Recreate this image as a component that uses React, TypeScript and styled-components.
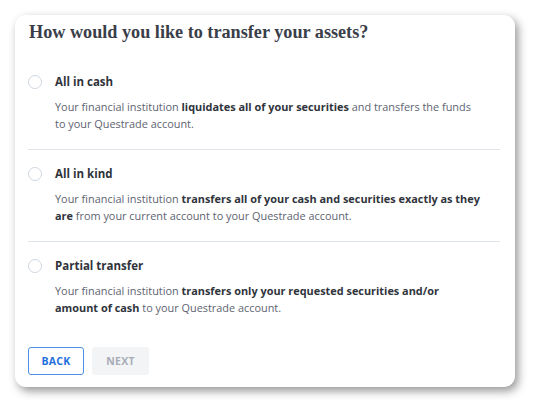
import React from "react";
import styled, { createGlobalStyle } from "styled-components";

const Global = createGlobalStyle`
  html, body { margin: 0; padding: 0; background: #ffffff; }
  body { font-family: "Open Sans", "Liberation Sans", sans-serif; }
`;

const Page = styled.div`
  padding: 15px 25px 26px 15px;
  width: 540px;
  box-sizing: border-box;
`;

const Card = styled.section`
  width: 500px;
  height: 372px;
  box-sizing: border-box;
  background: #fff;
  border-radius: 11px;
  box-shadow: 3px 4px 10px rgba(0, 0, 0, 0.42);
  padding: 6px 15px 12px 13px;
  display: flex;
  flex-direction: column;
`;

const Title = styled.h1`
  margin: 0 0 15px 1px;
  font-family: "Liberation Serif", "DejaVu Serif", serif;
  font-weight: 700;
  font-size: 18.2px;
  line-height: 22px;
  color: #3a3e49;
`;

const Option = styled.div<{ $last?: boolean }>`
  display: flex;
  gap: 13px;
  padding: 15px 0 ${(p) => (p.$last ? "0" : "17px")} 0;
  border-bottom: ${(p) => (p.$last ? "none" : "1px solid #dfe4ea")};
`;

const Radio = styled.span`
  flex: 0 0 auto;
  width: 14px;
  height: 14px;
  margin-top: 2px;
  border-radius: 50%;
  border: 1px solid #cfd6e0;
  box-sizing: border-box;
  background: #fff;
`;

const OptionBody = styled.div`
  display: flex;
  flex-direction: column;
  gap: 8px;
  flex: 1;
`;

const OptionTitle = styled.div`
  font-weight: 700;
  font-size: 11.5px;
  line-height: 18px;
  color: #2f333b;
`;

const Desc = styled.p`
  margin: 0;
  font-size: 10.9px;
  line-height: 16.5px;
  color: #5d6370;
  b {
    font-weight: 700;
    color: #30343c;
  }
`;

const Actions = styled.div`
  margin-top: auto;
  display: flex;
  gap: 8px;
`;

const Button = styled.button<{ $variant: "outline" | "disabled" }>`
  height: 28px;
  width: ${(p) => (p.$variant === "outline" ? "56px" : "57px")};
  box-sizing: border-box;
  border-radius: 3px;
  font-family: "Open Sans", "Liberation Sans", sans-serif;
  font-weight: 700;
  font-size: 10.5px;
  letter-spacing: 0.3px;
  padding: 0;
  cursor: pointer;
  border: ${(p) => (p.$variant === "outline" ? "1px solid #4b8fe6" : "none")};
  background: ${(p) => (p.$variant === "outline" ? "#fff" : "#f3f4f6")};
  color: ${(p) => (p.$variant === "outline" ? "#1e6fdc" : "#a7acb7")};
`;

export default function App() {
  return (
    <>
      <Global />
      <Page>
        <Card>
          <Title>How would you like to transfer your assets?</Title>
          <Option>
            <Radio />
            <OptionBody>
              <OptionTitle>All in cash</OptionTitle>
              <Desc>
                Your financial institution <b>liquidates all of your securities</b> and transfers the funds
                <br />
                to your Questrade account.
              </Desc>
            </OptionBody>
          </Option>
          <Option>
            <Radio />
            <OptionBody>
              <OptionTitle>All in kind</OptionTitle>
              <Desc>
                Your financial institution <b>transfers all of your cash and securities exactly as they
                <br />
                are</b> from your current account to your Questrade account.
              </Desc>
            </OptionBody>
          </Option>
          <Option $last>
            <Radio />
            <OptionBody>
              <OptionTitle>Partial transfer</OptionTitle>
              <Desc>
                Your financial institution <b>transfers only your requested securities and/or
                <br />
                amount of cash</b> to your Questrade account.
              </Desc>
            </OptionBody>
          </Option>
          <Actions>
            <Button $variant="outline">BACK</Button>
            <Button $variant="disabled" disabled>NEXT</Button>
          </Actions>
        </Card>
      </Page>
    </>
  );
}
